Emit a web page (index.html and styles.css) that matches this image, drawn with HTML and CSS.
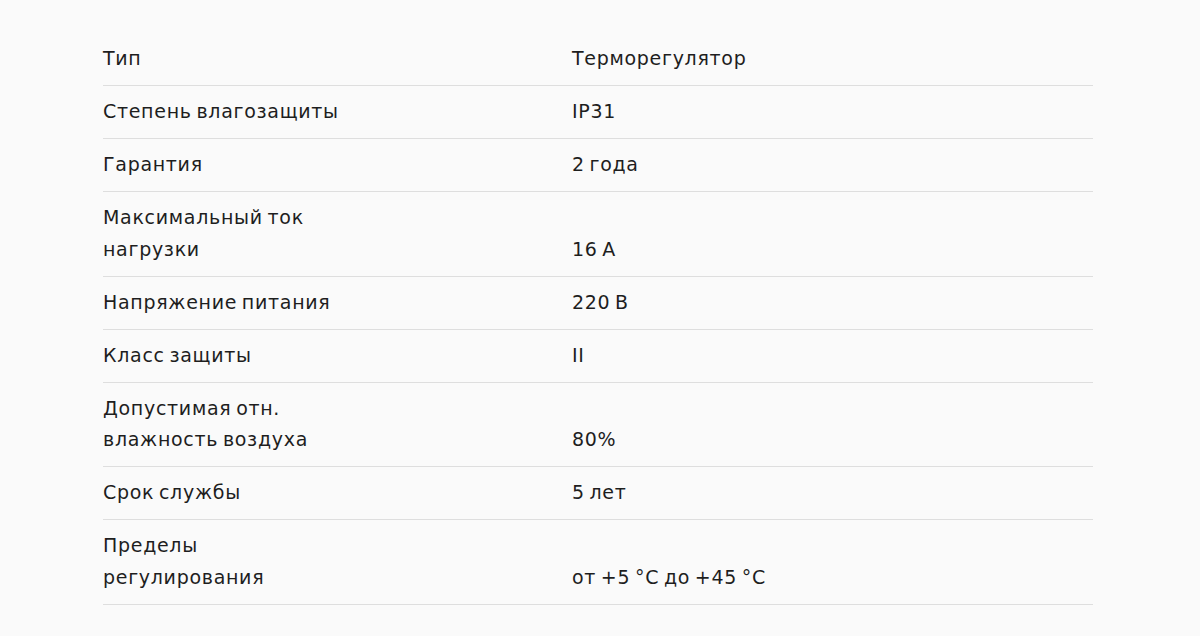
FILE: index.html
```html
<!DOCTYPE html>
<html lang="ru">
<head>
<meta charset="utf-8">
<title>Характеристики</title>
<link rel="stylesheet" href="styles.css">
</head>
<body>
<div class="specs">
  <table class="spec-table">
    <tbody>
      <tr><td class="name">Тип</td><td class="value">Терморегулятор</td></tr>
      <tr><td class="name">Степень влагозащиты</td><td class="value">IP31</td></tr>
      <tr><td class="name">Гарантия</td><td class="value">2 года</td></tr>
      <tr><td class="name">Максимальный ток<br>нагрузки</td><td class="value">16 А</td></tr>
      <tr><td class="name">Напряжение питания</td><td class="value">220 В</td></tr>
      <tr><td class="name">Класс защиты</td><td class="value">II</td></tr>
      <tr><td class="name">Допустимая отн.<br>влажность воздуха</td><td class="value">80%</td></tr>
      <tr><td class="name">Срок службы</td><td class="value">5 лет</td></tr>
      <tr><td class="name">Пределы<br>регулирования</td><td class="value">от +5 °C до +45 °C</td></tr>
    </tbody>
  </table>
</div>
</body>
</html>
```
FILE: styles.css
```css
html, body {
  margin: 0;
  padding: 0;
  background: #fafafa;
}
body {
  font-family: "DejaVu Sans", "Open Sans", sans-serif;
  color: #1e1e1e;
}
.specs {
  padding: 33px 107px 0 103px;
}
.spec-table {
  width: 990px;
  border-collapse: collapse;
  table-layout: fixed;
}
.spec-table td {
  padding: 10.25px 0;
  font-size: 19px;
  line-height: 31.5px;
  letter-spacing: 0.7px;
  word-spacing: -2px;
  border-bottom: 1px solid #dedede;
  vertical-align: bottom;
}
.spec-table .name {
  width: 469px;
}
```
